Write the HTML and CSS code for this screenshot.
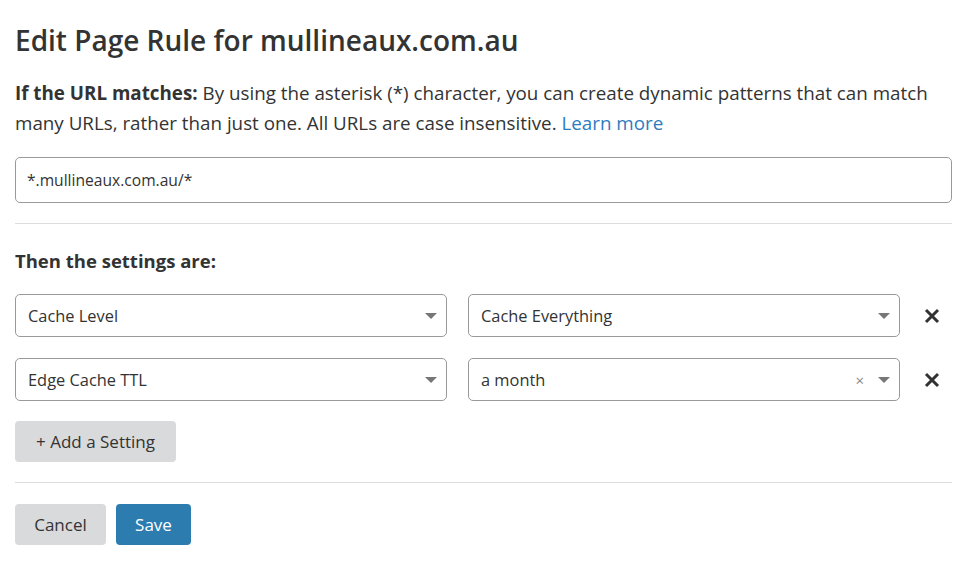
FILE: index.html
```html
<!DOCTYPE html>
<html lang="en">

<head>
  <meta charset="UTF-8">
  <title>Edit Page Rule</title>
  <link rel="stylesheet" href="styles.css">
</head>

<body>
  <div class="page_rule">
    <h2 class="title">Edit Page Rule for mullineaux.com.au</h2>

    <p class="desc">
      <strong>If the URL matches:</strong> <span>By using the asterisk (*) character, you can create dynamic patterns that can match</span><br>
      <span>many URLs, rather than just one. All URLs are case insensitive.</span> <a href="#">Learn more</a>
    </p>

    <input class="url_input" type="text" value="*.mullineaux.com.au/*">

    <hr class="divider">

    <h4 class="settings_title">Then the settings are:</h4>

    <!-- 설정 목록 -->
    <ul class="settings">
      <li class="setting_row">
        <div class="select">
          <span class="select_value">Cache Level</span>
          <span class="arrow"></span>
        </div>
        <div class="select">
          <span class="select_value">Cache Everything</span>
          <span class="arrow"></span>
        </div>
        <button class="remove" type="button" aria-label="remove">
          <svg width="16" height="16" viewBox="0 0 16 16">
            <path d="M2 2 L14 14 M14 2 L2 14" stroke="#333" stroke-width="3" />
          </svg>
        </button>
      </li>
      <li class="setting_row">
        <div class="select">
          <span class="select_value">Edge Cache TTL</span>
          <span class="arrow"></span>
        </div>
        <div class="select">
          <span class="select_value">a month</span>
          <span class="clear">&times;</span>
          <span class="arrow"></span>
        </div>
        <button class="remove" type="button" aria-label="remove">
          <svg width="16" height="16" viewBox="0 0 16 16">
            <path d="M2 2 L14 14 M14 2 L2 14" stroke="#333" stroke-width="3" />
          </svg>
        </button>
      </li>
    </ul>

    <button class="btn btn_gray add_btn" type="button">+ Add a Setting</button>

    <hr class="divider bottom">

    <div class="actions">
      <button class="btn btn_gray cancel_btn" type="button">Cancel</button>
      <button class="btn btn_blue save_btn" type="button">Save</button>
    </div>
  </div>
</body>

</html>
```

FILE: styles.css
```css
* {
  box-sizing: border-box;
  margin: 0;
  padding: 0;
  list-style: none;
}

body {
  font-family: "Open Sans", "Noto Sans", sans-serif;
  color: #333;
  background-color: #fff;
}

.page_rule {
  width: 972px;
  padding: 21px 20px 0 15px;
}

.title {
  font-size: 28px;
  font-weight: 600;
  line-height: 38px;
  color: #333;
}

.desc {
  margin-top: 19px;
  font-size: 18.8px;
  line-height: 30px;
  white-space: nowrap;
}

.desc strong {
  font-weight: 700;
}

.desc a {
  color: #2f7bbf;
  text-decoration: none;
}

.url_input {
  display: block;
  width: 100%;
  height: 46px;
  margin-top: 19px;
  padding: 0 11px;
  border: 1px solid #999;
  border-radius: 5px;
  font-family: inherit;
  font-size: 15.6px;
  color: #333;
}

.divider {
  margin-top: 20px;
  border: 0;
  border-top: 1px solid #ddd;
}

.settings_title {
  margin-top: 25px;
  font-size: 18.5px;
  font-weight: 700;
  line-height: 24px;
}

.settings {
  margin-top: 21px;
}

.setting_row {
  display: flex;
  align-items: center;
  height: 43px;
  margin-bottom: 21px;
}

.setting_row:last-child {
  margin-bottom: 20px;
}

.select {
  display: flex;
  align-items: center;
  width: 432px;
  height: 43px;
  margin-right: 21px;
  padding: 0 12px;
  border: 1px solid #999;
  border-radius: 5px;
  font-size: 16.4px;
}

.select_value {
  flex: 1;
}

.arrow {
  width: 0;
  height: 0;
  border-left: 6px solid transparent;
  border-right: 6px solid transparent;
  border-top: 6px solid #777;
  margin-right: -3px;
}

.clear {
  margin-right: 14px;
  font-size: 15px;
  color: #888;
}

.remove {
  display: flex;
  align-items: center;
  justify-content: center;
  width: 22px;
  height: 24px;
  border: 0;
  background: none;
}

.btn {
  height: 41px;
  padding: 0 20px;
  border: 0;
  border-radius: 4px;
  font-family: inherit;
  font-size: 17px;
}

.btn_gray {
  background-color: #d9dadb;
  color: #333;
}

.btn_blue {
  background-color: #2c7cb0;
  color: #fff;
}

.add_btn {
  width: 161px;
  padding: 0;
}

.cancel_btn {
  width: 91px;
  padding: 0;
}

.save_btn {
  width: 75px;
  padding: 0;
}

.divider.bottom {
  margin-top: 20px;
}

.actions {
  display: flex;
  gap: 10px;
  margin-top: 21px;
}
```
